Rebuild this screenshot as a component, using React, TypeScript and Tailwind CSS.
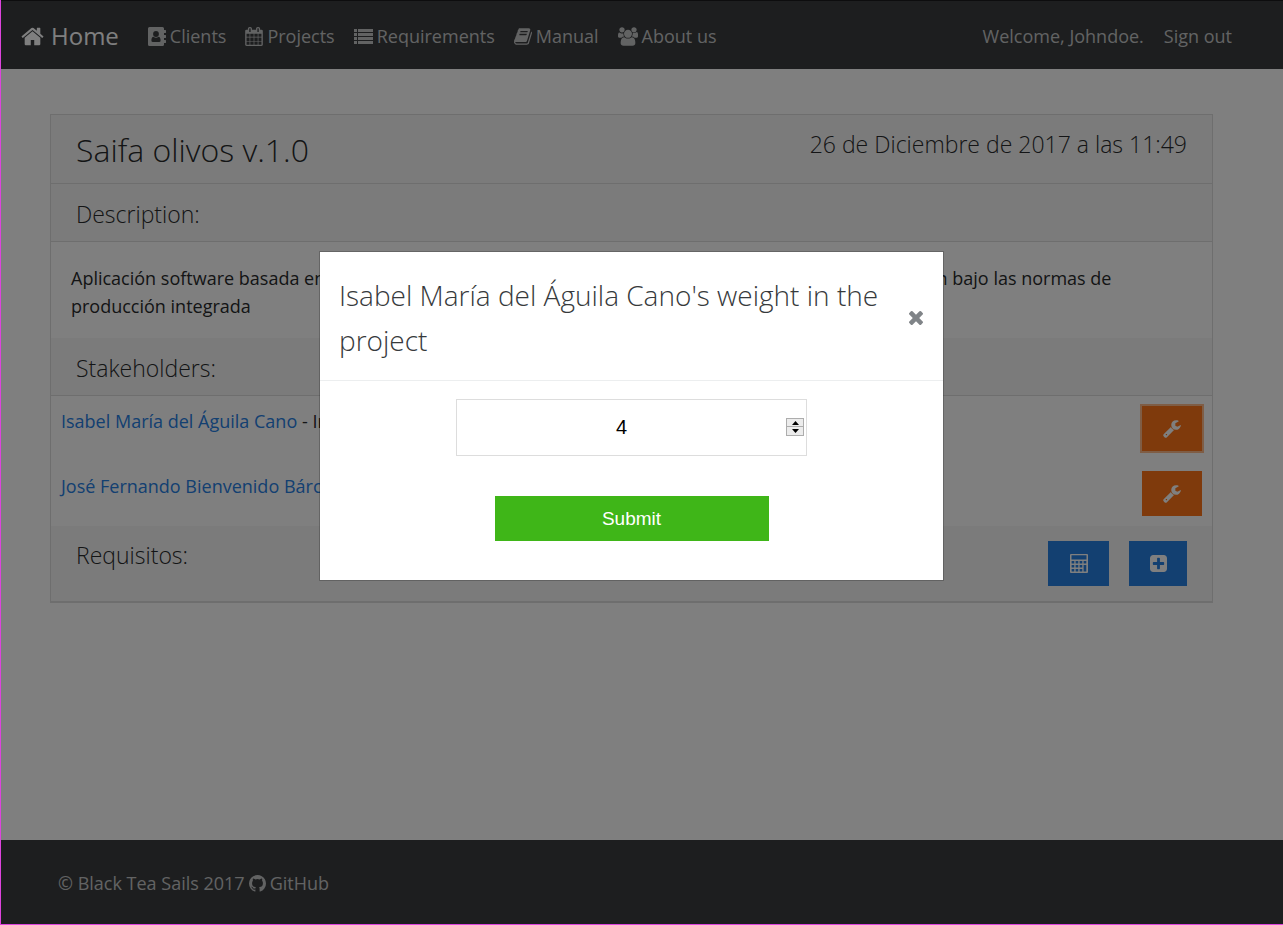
import { useState, type ReactNode } from 'react';

type IconProps = { className?: string };

function Glyph({ d, box, className }: { d: string; box: string; className?: string }) {
  return (
    <svg viewBox={box} className={className} fill="currentColor" fillRule="evenodd" aria-hidden="true">
      <path d={d} />
    </svg>
  );
}

const HomeIcon = ({ className }: IconProps) => (
  <Glyph
    className={className}
    box="64 200 1664 1400"
    d="M1472 992v480q0 26-19 45t-45 19h-384v-384h-256v384h-384q-26 0-45-19t-19-45v-480q0-1 .5-3t.5-3l575-474 575 474q1 2 1 6zm223-69l-62 74q-8 9-21 11h-3q-13 0-21-7l-692-577-692 577q-12 8-24 7-13-2-21-11l-62-74q-8-10-7-23.5t11-21.5l719-599q32-26 76-26t76 26l244 204v-195q0-14 9-23t23-9h192q14 0 23 9t9 23v408l219 182q10 8 11 21.5t-7 23.5z"
  />
);

const AddressBookIcon = ({ className }: IconProps) => (
  <Glyph
    className={className}
    box="0 0 18 19"
    d="M1.500 0h13A1.500 1.500 0 0 1 16 1.500V3h1.600q.4 0 .4.4v2.200q0 .4-.4.4H16v2h1.600q.4 0 .4.4v2.200q0 .4-.4.4H16v2h1.600q.4 0 .4.4v2.200q0 .4-.4.4H16v1.500A1.500 1.500 0 0 1 14.500 19h-13A1.500 1.500 0 0 1 0 17.500v-16A1.500 1.500 0 0 1 1.500 0zM8 4a2.900 3 0 0 0 0 6 2.900 3 0 0 0 0-6zM5.500 9.700C4 9.800 3.400 11.500 3.400 13.400q0 1.600 1.500 1.600h6.200q1.500 0 1.500-1.600c0-1.900-.6-3.600-2.100-3.700Q8 11.600 5.500 9.700z"
  />
);

const CalendarIcon = ({ className }: IconProps) => (
  <Glyph
    className={className}
    box="64 0 1664 1792"
    d="M192 1664h288v-288h-288v288zm352 0h320v-288h-320v288zm-352-352h288v-320h-288v320zm352 0h320v-320h-320v320zm-352-384h288v-288h-288v288zm736 736h320v-288h-320v288zm-384-736h320v-288h-320v288zm768 736h288v-288h-288v288zm-384-352h320v-320h-320v320zm-352-864v-288q0-13-9.500-22.500t-22.500-9.500h-64q-13 0-22.500 9.500t-9.500 22.500v288q0 13 9.500 22.500t22.500 9.500h64q13 0 22.500-9.500t9.500-22.500zm736 864h288v-320h-288v320zm-384-384h320v-288h-320v288zm384 0h288v-288h-288v288zm32-480v-288q0-13-9.500-22.500t-22.500-9.500h-64q-13 0-22.500 9.500t-9.500 22.500v288q0 13 9.500 22.500t22.500 9.500h64q13 0 22.500-9.500t9.500-22.500zm384-64v1280q0 52-38 90t-90 38h-1408q-52 0-90-38t-38-90v-1280q0-52 38-90t90-38h128v-96q0-66 47-113t113-47h64q66 0 113 47t47 113v96h384v-96q0-66 47-113t113-47h64q66 0 113 47t47 113v96h128q52 0 90 38t38 90z"
  />
);

const ListIcon = ({ className }: IconProps) => (
  <Glyph
    className={className}
    box="0 0 19 15"
    d="M0 0h3v3H0zM4 0h15v3H4zM0 4h3v3H0zM4 4h15v3H4zM0 8h3v3H0zM4 8h15v3H4zM0 12h3v3H0zM4 12h15v3H4z"
  />
);

const BookIcon = ({ className }: IconProps) => (
  <Glyph
    className={className}
    box="64 120 1664 1550"
    d="M1703 478q40 57 18 129l-275 906q-19 64-76.500 107.500t-122.500 43.500h-923q-77 0-148.500-53.500t-99.500-131.500q-24-67-2-127 0-4 3-27t4-37q1-8-3-21.500t-3-19.500q2-11 8-21t16.500-23.500 16.500-23.500q23-38 45-91.500t30-91.500q3-10 .5-30t-.5-28q3-11 17-28t17-23q21-36 42-92t25-90q1-9-2.500-32t.5-28q4-13 22-30.500t22-22.500q19-26 42.500-84.500t27.500-96.500q1-8-3-25.500t-2-26.500q2-8 9-18t18-23 17-21q8-12 16.500-30.500t15-35 16-36 19.500-32 26.500-23.500 36-11.500 47.500 5.500l-1 3q38-9 51-9h761q74 0 114 56t18 130l-274 906q-36 119-71.500 153.500t-128.500 34.500h-869q-27 0-38 15-11 16-1 43 24 70 144 70h923q29 0 56-15.500t35-41.500l300-987q7-22 5-57 38 15 59 43zm-1064 2q-4 13 2 22.500t20 9.500h608q13 0 25.500-9.500t16.500-22.500l21-64q4-13-2-22.500t-20-9.500h-608q-13 0-25.500 9.500t-16.500 22.500zm-83 256q-4 13 2 22.500t20 9.500h608q13 0 25.500-9.500t16.500-22.500l21-64q4-13-2-22.500t-20-9.500h-608q-13 0-25.500 9.500t-16.500 22.500z"
  />
);

const UsersIcon = ({ className }: IconProps) => (
  <Glyph
    className={className}
    box="0 0 1920 1792"
    d="M593 896q-162 5-265 128h-134q-82 0-138-40.500t-56-118.500q0-353 124-353 6 0 43.500 21t97.500 42.500 119 21.500q67 0 133-23-5 37-5 66 0 159 81 256zm1071 637q0 120-73 189.500t-194 69.500h-874q-121 0-194-69.500t-73-189.500q0-53 3.500-103.500t14-109 26.500-108.500 43-97.500 62-81 85.500-53.500 111.500-20q10 0 43 21.500t73 48 107 48 135 21.500 135-21.500 107-48 73-48 43-21.500q61 0 111.500 20t85.500 53.500 62 81 43 97.500 26.500 108.500 14 109 3.500 103.500zm-1024-1277q0 106-75 181t-181 75-181-75-75-181 75-181 181-75 181 75 75 181zm704 384q0 159-112.500 271.500t-271.500 112.500-271.500-112.500-112.500-271.500 112.500-271.500 271.500-112.500 271.500 112.500 112.500 271.500zm576 225q0 78-56 118.500t-138 40.500h-134q-103-123-265-128 90-131 90-293 0-29-5-66 66 23 133 23 59 0 119-21.500t97.500-42.500 43.500-21q124 0 124 353zm-128-609q0 106-75 181t-181 75-181-75-75-181 75-181 181-75 181 75 75 181z"
  />
);

const WrenchIcon = ({ className }: IconProps) => (
  <Glyph
    className={className}
    box="64 110 1680 1680"
    d="M448 1472q0-26-19-45t-45-19-45 19-19 45 19 45 45 19 45-19 19-45zm644-420l-682 682q-37 37-90 37-52 0-91-37l-106-108q-38-36-38-90 0-53 38-91l681-681q39 98 114.500 173.500t173.500 114.500zm634-435q0 39-23 106-47 134-164.500 217.500t-258.500 83.500q-185 0-316.500-131.500t-131.500-316.500 131.500-316.500 316.500-131.500q58 0 121.500 16.500t107.500 46.500q16 11 16 28t-16 28l-293 169v224l193 107q5-3 79-48.500t135.500-81 70.500-35.500q15 0 23.500 10t8.500 25z"
  />
);

const CalculatorIcon = ({ className }: IconProps) => (
  <Glyph
    className={className}
    box="0 0 18 19"
    d="M1 0h16q1 0 1 1v17q0 1-1 1H1q-1 0-1-1V1q0-1 1-1zM1.500 1.300v4.200h15V1.300zM1.600 7v2.500h2.700V7zm4 0v2.500h2.700V7zm4 0v2.500h2.700V7zm4 0v2.500h2.700V7zM1.600 11v2.500h2.700V11zm4 0v2.500h2.700V11zm4 0v2.500h2.700V11zm4 0v6.500h2.700V11zM1.600 15v2.500h2.700V15zm4 0v2.500h2.700V15zm4 0v2.500h2.700V15z"
  />
);

const PlusSquareIcon = ({ className }: IconProps) => (
  <Glyph
    className={className}
    box="128 128 1536 1536"
    d="M1408 960v-128q0-26-19-45t-45-19h-320v-320q0-26-19-45t-45-19h-128q-26 0-45 19t-19 45v320h-320q-26 0-45 19t-19 45v128q0 26 19 45t45 19h320v320q0 26 19 45t45 19h128q26 0 45-19t19-45v-320h320q26 0 45-19t19-45zm256-544v960q0 119-84.500 203.500t-203.500 84.500h-960q-119 0-203.500-84.500t-84.500-203.500v-960q0-119 84.500-203.500t203.500-84.500h960q119 0 203.500 84.500t84.500 203.500z"
  />
);

const GithubIcon = ({ className }: IconProps) => (
  <Glyph
    className={className}
    box="128 128 1536 1536"
    d="M896 128q209 0 385.500 103t279.500 279.500 103 385.500q0 251-146.500 451.500t-378.500 277.500q-27 5-40-7t-13-30q0-3 .5-76.500t.5-134.500q0-97-52-142 57-6 102.500-18t94-39 81-66.500 53-105 20.500-150.500q0-119-79-206 37-91-8-204-28-9-81 11t-92 44l-38 24q-93-26-192-26t-192 26q-16-11-42.500-27t-83.500-38.500-85-13.500q-45 113-8 204-79 87-79 206 0 85 20.500 150t52.500 105 80.500 67 94 39 102.500 18q-39 36-49 103-21 10-45 15t-57 5-65.500-21.500-55.500-62.500q-19-32-48.500-52t-49.500-24l-20-3q-21 0-29 4.500t-5 11.500 9 14 13 12l7 5q22 10 43.500 38t31.500 51l10 23q13 38 44 61.500t67 30 69.500 7 55.500-3.500l23-4q0 38 .5 88.500t.5 54.500q0 18-13 30t-40 7q-232-77-378.500-277.500t-146.500-451.500q0-209 103-385.500t279.500-279.500 385.500-103z"
  />
);

const TimesIcon = ({ className }: IconProps) => (
  <Glyph
    className={className}
    box="302 366 1188 1188"
    d="M1490 1322q0 40-28 68l-136 136q-28 28-68 28t-68-28l-294-294-294 294q-28 28-68 28t-68-28l-136-136q-28-28-28-68t28-68l294-294-294-294q-28-28-28-68t28-68l136-136q28-28 68-28t68 28l294 294 294-294q28-28 68-28t68 28l136 136q28 28 28 68t-28 68l-294 294 294 294q28 28 28 68z"
  />
);

const links: { label: string; icon: ReactNode }[] = [
  { label: 'Clients', icon: <AddressBookIcon className="h-[19px] w-[18px]" /> },
  { label: 'Projects', icon: <CalendarIcon className="h-[19px] w-[18px]" /> },
  { label: 'Requirements', icon: <ListIcon className="h-[15px] w-[19px]" /> },
  { label: 'Manual', icon: <BookIcon className="h-[17px] w-[18px]" /> },
  { label: 'About us', icon: <UsersIcon className="h-[19px] w-[20px]" /> },
];

function Navbar() {
  return (
    <nav className="flex h-[69px] items-center border-t border-[#1a1b1c] bg-[#3a3d3f] pt-[2px] pr-[51px] pl-5 text-[#c5c6c7]">
      <a href="#home" className="mr-[29px] flex items-center gap-[7px] text-2xl text-white">
        <HomeIcon className="h-[19px] w-[23px]" />
        Home
      </a>
      <ul className="flex items-center gap-[19px]">
        {links.map(({ label, icon }) => (
          <li key={label}>
            <a href={`#${label}`} className="flex items-center gap-1">
              {icon}
              {label}
            </a>
          </li>
        ))}
      </ul>
      <div className="ml-auto flex gap-5">
        <span>Welcome, Johndoe.</span>
        <a href="#signout">Sign out</a>
      </div>
    </nav>
  );
}

function SectionHeader({ children }: { children: ReactNode }) {
  return (
    <h2 className="border-b border-[#dcdcdc] bg-[#f7f7f7] px-[25px] pt-[15px] pb-[12px] text-[23px] leading-[30px] font-light">
      {children}
    </h2>
  );
}

function Stakeholder({ name, role, active }: { name: string; role: string; active?: boolean }) {
  return (
    <li className="flex h-[65px] items-start justify-between p-[10px]">
      <p className="leading-[30px]">
        <a href="#stakeholder" className="text-[#2780e3]">{name}</a> - {role}
      </p>
      <button
        type="button"
        aria-label={`Edit weight of ${name}`}
        className={
          active
            ? 'flex h-[45px] w-[60px] items-center justify-center bg-[#ff7518] text-white ring-2 ring-[#ff7518]/50'
            : 'flex h-[45px] w-[60px] items-center justify-center bg-[#ff7518] text-white'
        }
      >
        <WrenchIcon className="size-[18px]" />
      </button>
    </li>
  );
}

function ProjectCard() {
  return (
    <section className="border border-b-2 border-[#dcdcdc] bg-white">
      <header className="flex h-[69px] items-start justify-between border-b border-[#dcdcdc] bg-[#f7f7f7] px-[25px] pt-[14px] font-light">
        <h1 className="text-[32px] leading-[42px]">Saifa olivos v.1.0</h1>
        <span className="text-[23px] leading-[30px]">26 de Diciembre de 2017 a las 11:49</span>
      </header>
      <SectionHeader>Description:</SectionHeader>
      <p className="px-5 pt-[22px] pb-[18px] leading-7">
        Aplicación software basada en conocimientos para la ayuda a la gestión del olivar y a la toma de decisión bajo
        las normas de producción integrada
      </p>
      <SectionHeader>Stakeholders:</SectionHeader>
      <ul>
        <Stakeholder name="Isabel María del Águila Cano" role="Investigadora" active />
        <Stakeholder name="José Fernando Bienvenido Bárcena" role="Investigador" />
      </ul>
      <div className="flex items-start justify-between bg-[#f7f7f7] px-[25px] py-[15px]">
        <h2 className="text-[23px] leading-7 font-light">Requisitos:</h2>
        <div className="flex gap-5">
          <button type="button" aria-label="Calculate" className="flex h-[45px] w-[61px] items-center justify-center bg-[#2780e3] text-white">
            <CalculatorIcon className="h-[19px] w-[18px]" />
          </button>
          <button type="button" aria-label="Add requirement" className="flex h-[45px] w-[58px] items-center justify-center bg-[#2780e3] text-white">
            <PlusSquareIcon className="size-[17px]" />
          </button>
        </div>
      </div>
    </section>
  );
}

function WeightDialog() {
  const [weight, setWeight] = useState(4);
  return (
    <div className="absolute inset-0 flex items-start justify-center bg-black/50 pt-[251px] pr-[21px]">
      <div role="dialog" aria-modal="true" aria-labelledby="dialog-title" className="w-full max-w-[625px] border border-black/20 bg-white bg-clip-padding">
        <header className="flex items-center justify-between gap-4 border-b border-[#eceeef] pt-[21px] pr-5 pb-[17px] pl-[19px]">
          <h2 id="dialog-title" className="text-[28px] leading-[45px] font-light">
            Isabel María del Águila Cano's weight in the project
          </h2>
          <button type="button" aria-label="Close" className="text-[#808488]">
            <TimesIcon className="size-[14px]" />
          </button>
        </header>
        <form className="flex flex-col items-center gap-10 pt-[18px] pb-[39px] font-['Liberation_Sans',Arial,sans-serif] text-[19px]" onSubmit={(e) => e.preventDefault()}>
          <div className="relative">
            <input
              type="number"
              aria-label="Weight"
              value={weight}
              onChange={(e) => setWeight(Number(e.target.value))}
              className="h-[57px] w-[351px] appearance-none border border-[#dddddd] bg-white pr-5 text-center text-xl text-black [appearance:textfield] [&::-webkit-inner-spin-button]:appearance-none"
            />
            <div className="absolute top-[19px] right-[3px] flex w-[18px] flex-col border border-[#adadad] bg-[#ececec]">
              <button type="button" aria-label="Increase" onClick={() => setWeight(weight + 1)} className="flex h-2 items-center justify-center border-b border-[#adadad]">
                <svg viewBox="0 0 7 4" className="h-1 w-[7px]" aria-hidden="true"><path d="M3.500 0L7 4H0z" /></svg>
              </button>
              <button type="button" aria-label="Decrease" onClick={() => setWeight(weight - 1)} className="flex h-2 items-center justify-center">
                <svg viewBox="0 0 7 4" className="h-1 w-[7px]" aria-hidden="true"><path d="M3.500 4L0 0h7z" /></svg>
              </button>
            </div>
          </div>
          <button type="submit" className="h-[45px] w-[274px] bg-[#3fb618] text-white">Submit</button>
        </form>
      </div>
    </div>
  );
}

export default function App() {
  return (
    <div className="relative flex min-h-screen flex-col border-b border-l border-[#dd44dd] bg-white font-['Segoe_UI','Open_Sans',sans-serif] text-lg text-[#373a3c]">
      <Navbar />
      <main className="grow pt-[45px] pr-[70px] pb-10 pl-[49px] text-[#292b2c]">
        <ProjectCard />
      </main>
      <footer className="flex h-[84px] items-center gap-1 bg-[#3a3d3f] px-[57px] pt-[2px] text-[#c5c6c7]">
        <span>© Black Tea Sails 2017</span>
        <a href="#github" className="flex items-center gap-1">
          <GithubIcon className="size-[17px]" />
          GitHub
        </a>
      </footer>
      <WeightDialog />
    </div>
  );
}
